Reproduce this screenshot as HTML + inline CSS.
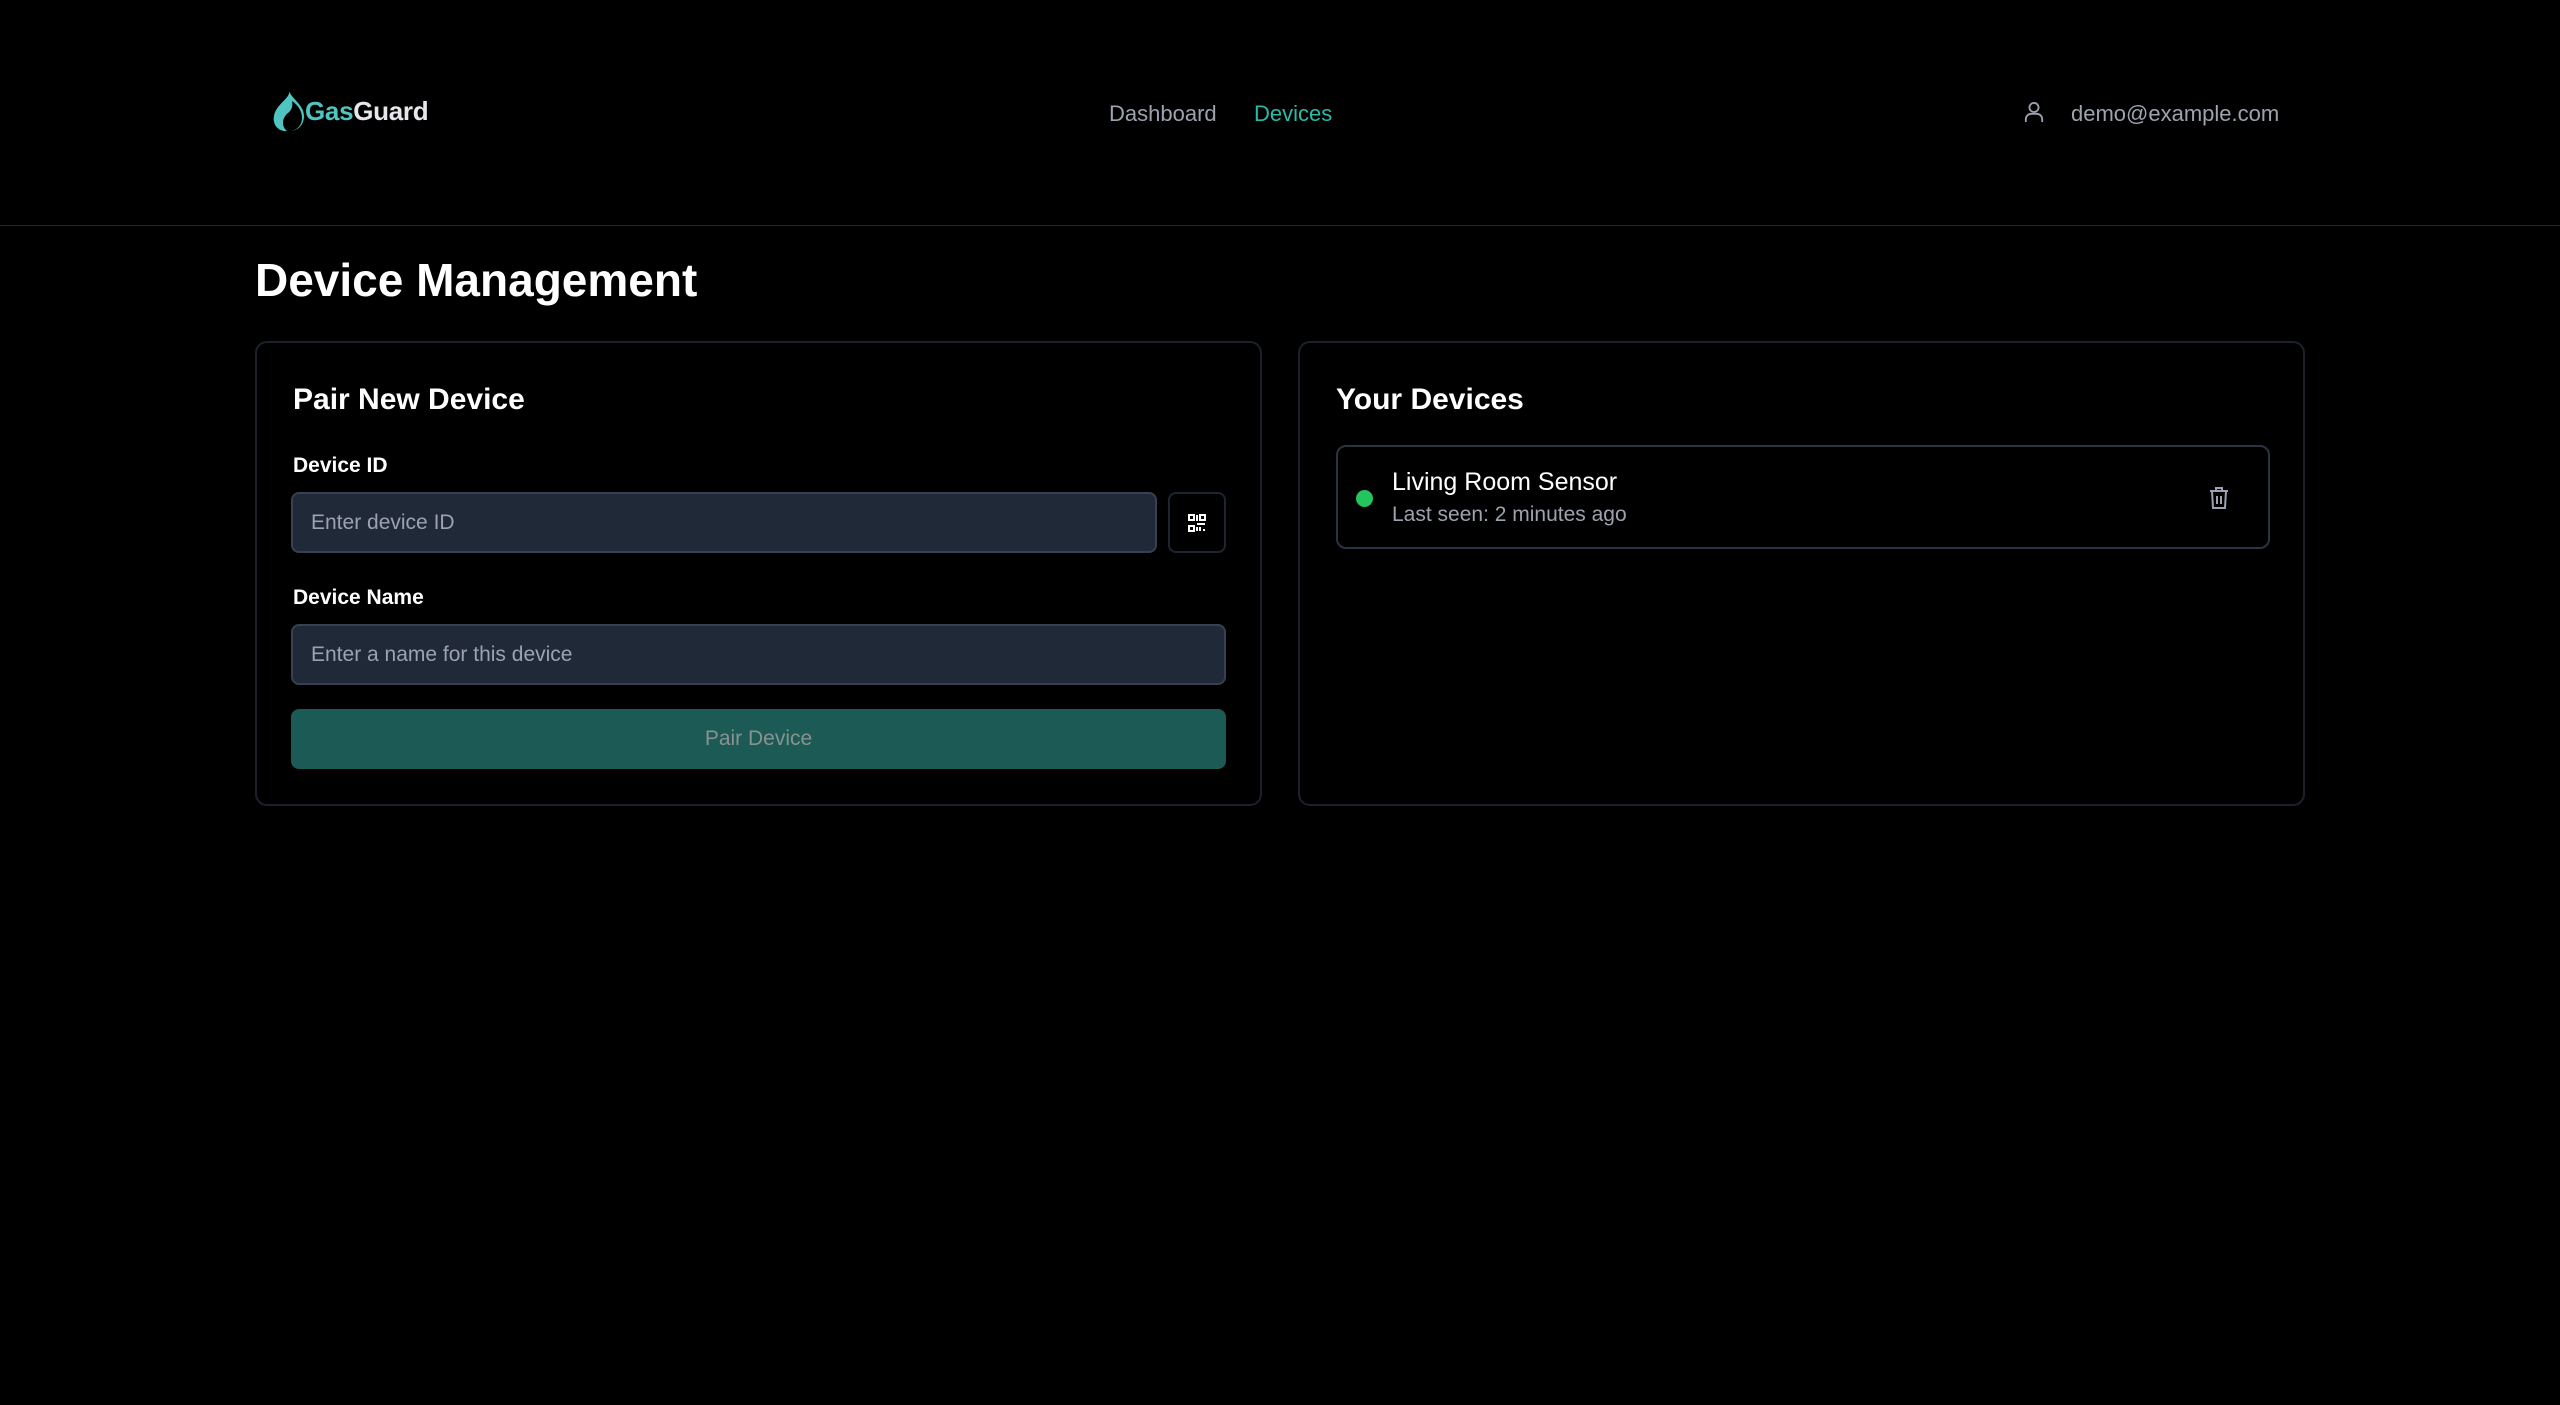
<!DOCTYPE html>
<html><head><meta charset="utf-8"><style>
*{box-sizing:border-box;margin:0;padding:0}
body{width:2560px;height:1405px;background:#000;font-family:"Liberation Sans",sans-serif;color:#fff;position:relative;overflow:hidden}
.abs{position:absolute}
.hdr{left:0;top:0;width:2560px;height:226px;border-bottom:1px solid #1f2532}
.logo{left:272px;top:90px;display:flex;align-items:center}
.logo span{font-size:26px;font-weight:bold;letter-spacing:-0.3px}
.nav{top:101px;font-size:22px}
.card{border:2px solid #1c212b;border-radius:12px;background:#000}
h2{font-size:30px;font-weight:bold;position:absolute}
.lbl{font-size:21px;font-weight:bold;position:absolute;left:36px}
.inp{position:absolute;background:#1f2937;border:2px solid #374151;border-radius:8px;color:#9ca3af;font-size:21px;padding-left:18px;display:flex;align-items:center}
</style></head><body>
<div class="abs hdr"></div>
<div class="abs logo">
<svg width="32" height="42" viewBox="0 0 32 42"><path d="M17 1C19 8 4 14 2 26c-2 10 6 16 13 15C9 36 10 28 16 23c4-3 5-8 4-12 6 4 10 10 10 17 0 8-6 13-13 13 9 0 15-6 15-15C32 15 20 9 17 1z" fill="#4fc4c0"/></svg>
<span style="color:#4fc4c0;margin-left:1px">Gas</span><span style="color:#e5e7eb">Guard</span>
</div>
<div class="abs nav" style="left:1109px;color:#9ca3af">Dashboard</div>
<div class="abs nav" style="left:1254px;color:#2cb8a6">Devices</div>
<svg class="abs" style="left:2024px;top:101px" width="20" height="22" viewBox="0 0 22 24" fill="none" stroke="#9ca3af" stroke-width="2"><circle cx="11" cy="7" r="5"/><path d="M2 23v-3a6 6 0 0 1 6-6h6a6 6 0 0 1 6 6v3"/></svg>
<div class="abs nav" style="left:2071px;color:#9ca3af">demo@example.com</div>

<div class="abs" style="left:255px;top:253px;font-size:46px;font-weight:bold">Device Management</div>

<div class="abs card" style="left:255px;top:341px;width:1007px;height:465px">
<h2 style="left:36px;top:40px">Pair New Device</h2>
<div class="lbl" style="top:111px">Device ID</div>
<div class="inp" style="left:34px;top:149px;width:866px;height:61px">Enter device ID</div>
<div class="abs" style="left:911px;top:149px;width:58px;height:61px;border:2px solid #1f2530;border-radius:8px;display:flex;align-items:center;justify-content:center">
<svg width="20" height="20" viewBox="0 0 20 20" fill="none" stroke="#fff" stroke-width="2"><rect x="2" y="2" width="5" height="5"/><rect x="13" y="2" width="5" height="5"/><rect x="2" y="13" width="5" height="5"/><path d="M10 2v6M10 11h8M13 14v4M16 17h2M10 14v4"/></svg></div>
<div class="lbl" style="top:243px">Device Name</div>
<div class="inp" style="left:34px;top:281px;width:935px;height:61px">Enter a name for this device</div>
<div class="abs" style="left:34px;top:366px;width:935px;height:60px;background:#1b5a55;border-radius:8px;color:#8a9290;font-size:21px;display:flex;align-items:center;justify-content:center">Pair Device</div>
</div>

<div class="abs card" style="left:1298px;top:341px;width:1007px;height:465px">
<h2 style="left:36px;top:40px">Your Devices</h2>
<div class="abs" style="left:36px;top:102px;width:934px;height:104px;border:2px solid #2c3340;border-radius:10px">
<div class="abs" style="left:18px;top:43px;width:17px;height:17px;border-radius:50%;background:#22c55e"></div>
<div class="abs" style="left:54px;top:21px;font-size:25px">Living Room Sensor</div>
<div class="abs" style="left:54px;top:56px;font-size:21px;color:#9ca3af">Last seen: 2 minutes ago</div>
<svg class="abs" style="left:870px;top:38px" width="22" height="26" viewBox="0 0 22 26" fill="none" stroke="#9ca3af" stroke-width="2"><path d="M2 6h18M8 6V3h6v3M4 6l1 17h12l1-17M9 11v8M13 11v8"/></svg>
</div>
</div>
</body></html>
